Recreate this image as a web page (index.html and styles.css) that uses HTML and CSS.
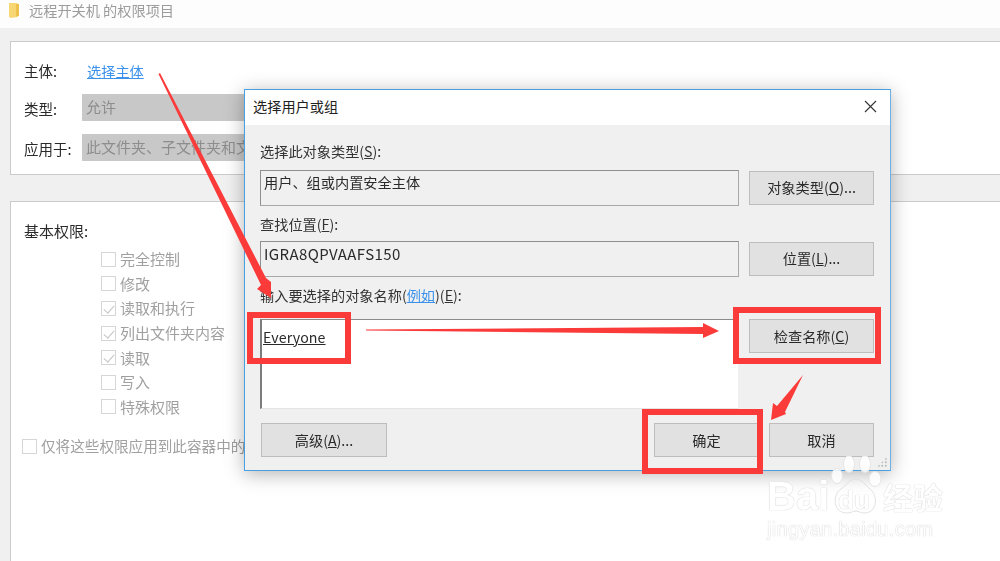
FILE: index.html
```html
<!DOCTYPE html>
<html lang="zh">
<head>
<meta charset="utf-8">
<title>选择用户或组</title>
<link rel="stylesheet" href="styles.css">
</head>
<body>
<div class="page">
  <header class="topbar">
    <svg class="folder" width="13" height="16" viewBox="0 0 13 16"><path d="M1 1h8l1 2v12l-7 1-2-1z" fill="#f7d774"/><path d="M8 2h3v12H8z" fill="#eec04c"/></svg>
    <span>远程开关机 的权限项目</span>
  </header>
  <section class="panel principal">
    <div class="row first"><span class="label">主体:</span><a class="link">选择主体</a></div>
    <div class="row"><span class="label">类型:</span><div class="fake-select">允许</div></div>
    <div class="row"><span class="label">应用于:</span><div class="fake-select">此文件夹、子文件夹和文件</div></div>
  </section>
  <section class="panel perms">
    <div class="perm-title">基本权限:</div>
    <ul class="perm-list">
      <li><i class="box"></i>完全控制</li>
      <li><i class="box"></i>修改</li>
      <li><i class="box on"></i>读取和执行</li>
      <li><i class="box on"></i>列出文件夹内容</li>
      <li><i class="box on"></i>读取</li>
      <li><i class="box"></i>写入</li>
      <li><i class="box"></i>特殊权限</li>
    </ul>
    <div class="only"><i class="box"></i>仅将这些权限应用到此容器中的对象</div>
  </section>
</div>

<div class="dialog">
  <div class="titlebar">
    <span>选择用户或组</span>
    <svg class="close" width="13" height="13" viewBox="0 0 13 13"><path d="M1 1l11 11M12 1L1 12" stroke="#333" stroke-width="1.1" fill="none"/></svg>
  </div>
  <div class="body">
    <div class="cap cap1">选择此对象类型(<u>S</u>):</div>
    <div class="line">
      <div class="field">用户、组或内置安全主体</div>
      <button class="btn raised">对象类型(<u>O</u>)...</button>
    </div>
    <div class="cap cap2">查找位置(<u>F</u>):</div>
    <div class="line">
      <div class="field loc">IGRA8QPVAAFS150</div>
      <button class="btn raised">位置(<u>L</u>)...</button>
    </div>
    <div class="cap cap3">输入要选择的对象名称(<a class="link">例如</a>)(<u>E</u>):</div>
    <div class="line names">
      <div class="field area"><u>Everyone</u></div>
      <button class="btn">检查名称(<u>C</u>)</button>
    </div>
    <div class="actions">
      <button class="btn adv">高级(<u>A</u>)...</button>
      <button class="btn ok">确定</button>
      <button class="btn cancel">取消</button>
    </div>
  </div>
  <div class="grip"></div>
</div>

<svg class="marks" width="1000" height="561" viewBox="0 0 1000 561">
  <g fill="none" stroke="#fb3a3a" stroke-width="6">
    <rect x="250" y="315" width="98" height="46"/>
    <rect x="736" y="310" width="142" height="51"/>
    <rect x="645" y="412" width="115" height="59"/>
  </g>
  <g fill="#fb3a3a">
    <path d="M158.500 74L160 73L266 278L271 282L271 298L257 289L261 285z"/>
    <path d="M366 329.500L703 327L703 323L719 331L703 338L703 334L366 330.500z"/>
    <path d="M803 375L785 412L786 414L771 420L773 403L777 406z"/>
  </g>
</svg>

<div class="watermark">
  <div class="wm-top">
    <span class="wm-bai">Bai</span>
    <span class="wm-du">du</span>
    <span class="wm-cn">经验</span>
  </div>
  <div class="wm-url">jingyan.baidu.com</div>
  <svg class="paw" width="56" height="62" viewBox="0 0 56 62">
    <g fill="#fff" fill-opacity="0.85" stroke="#e4e4e4" stroke-width="1">
      <ellipse cx="7" cy="21" rx="5.500" ry="7.500"/>
      <ellipse cx="19" cy="9" rx="5.500" ry="8.500"/>
      <ellipse cx="35" cy="9" rx="5.500" ry="8.500"/>
      <ellipse cx="45" cy="24" rx="6" ry="7.500"/>
    </g>
    <path d="M26 24c6 0 9 6 14 10 8 6 8 24-6 24-4 0-5-2-8-2s-5 2-9 2C3 58 2 40 11 34c6-4 8-10 15-10z" fill="none" stroke="#e0e0e0" stroke-width="1"/>
  </svg>
</div>
</body>
</html>
```
FILE: styles.css
```css
* { box-sizing: border-box; }
html, body { margin: 0; padding: 0; }
body {
  width: 1000px;
  height: 561px;
  overflow: hidden;
  position: relative;
  background: #fff;
  font-family: "Noto Sans CJK SC", "Liberation Sans", sans-serif;
  font-size: 14.2px;
  line-height: 20px;
  color: #222;
}
.page, .dialog, .marks { filter: blur(0.3px); }
.page {
  height: 561px;
  display: flex;
  flex-direction: column;
  background: #f0f0f0;
  padding-left: 10px;
}
.topbar {
  height: 28px;
  margin-left: -10px;
  padding: 0 0 8px 8px;
  background: #fdfdfd;
  display: flex;
  align-items: center;
  gap: 8px;
  font-size: 14.2px;
  color: #9c9c9c;
}
.panel {
  background: #fff;
  border: 1px solid #cbcbcb;
  border-right: 0;
}
.principal {
  margin-top: 13px;
  height: 134px;
  padding: 17px 0 0 13px;
}
.perms {
  margin-top: 26px;
  flex: 1;
  position: relative;
  padding: 19px 0 0 13px;
  border-bottom: 0;
}
.row {
  display: flex;
  align-items: center;
  height: 27px;
  margin-bottom: 13px;
}
.row.first { margin-bottom: 11px; height: 24px; }
.label { width: 58px; padding-top: 3px; font-size: 14.5px; color: #2a2a2a; }
.row.first .label { width: 63px; padding-top: 0; }
.fake-select {
  width: 260px;
  height: 27px;
  padding: 3px 4px;
  background: #c8c8c8;
  font-size: 15px;
  color: #8d8d8d;
}
.link { color: #3c92ea; text-decoration: underline; }
.perm-title { color: #2a2a2a; height: 20px; font-size: 15px; }
.perm-list {
  list-style: none;
  margin: 6px 0 0 77px;
  padding: 0;
  font-size: 15px;
}
.perm-list li {
  height: 24.6px;
  display: flex;
  align-items: center;
  gap: 4px;
  color: #a0a0a0;
}
.box {
  width: 15px;
  height: 15px;
  flex: none;
  border: 1px solid #d6d6d6;
  background: #fff;
}
.box.on { position: relative; }
.box.on::after {
  content: "";
  position: absolute;
  left: 4px;
  top: 1px;
  width: 5px;
  height: 9px;
  border: solid #c4c4c4;
  border-width: 0 1px 1px 0;
  transform: rotate(42deg);
}
.only {
  margin: 17px 0 0 -2px;
  display: flex;
  align-items: center;
  gap: 4px;
  white-space: nowrap;
  font-size: 14.6px;
  color: #a0a0a0;
}
.dialog {
  position: absolute;
  left: 244px;
  top: 89px;
  width: 647px;
  height: 382px;
  background: #f0f0f0;
  border: 1px solid #4a9fe0;
  border-right-color: #6cb0e8;
  box-shadow: 0 3px 18px rgba(0, 0, 0, 0.3);
}
.titlebar {
  height: 35px;
  background: #fff;
  display: flex;
  align-items: center;
  justify-content: space-between;
  padding: 0 13px 3px 8px;
  color: #222;
}
.body { padding: 0 16px 0 15px; }
.cap { height: 20px; color: #333; }
.cap1 { margin-top: 16px; margin-bottom: 9px; }
.cap2 { margin-top: 8px; margin-bottom: 7px; }
.cap3 { margin-top: 8px; margin-bottom: 14px; }
.line {
  display: flex;
  align-items: center;
  justify-content: space-between;
  height: 36px;
}
.field {
  width: 479px;
  height: 36px;
  padding: 1px 3px;
  background: #f0f0f0;
  border: 1px solid #8f8f8f;
  border-right-color: #a8a8a8;
  border-bottom-color: #a8a8a8;
  color: #2a2a2a;
}
.field.loc {
  padding-top: 2px;
  font-size: 15px;
  letter-spacing: 0.4px;
}
.names { height: 90px; align-items: flex-start; }
.field.area {
  height: 90px;
  padding: 7px 1px;
  background: #fff;
  border-color: #8a8a8a #f0f0f0 #e4e4e4 #7c7c7c;
  border-width: 1px 1px 1px 2px;
  letter-spacing: 0.1px;
}
.btn {
  width: 125px;
  height: 34px;
  padding: 0;
  border: 1px solid #bdbdbd;
  background: #e1e1e1;
  font: inherit;
  color: #2a2a2a;
}
.btn.raised { padding-bottom: 2px; }
.actions {
  margin-top: 14px;
  display: flex;
  padding-left: 1px;
}
.adv { width: 126px; }
.ok { width: 105px; margin-left: auto; }
.cancel { width: 105px; margin-left: 10px; }
.grip {
  position: absolute;
  right: 3px;
  bottom: 3px;
  width: 10px;
  height: 10px;
  background: radial-gradient(circle, #b8b8b8 1px, transparent 1.2px) 0 0 / 3.500px 3.500px;
  clip-path: polygon(100% 0, 100% 100%, 0 100%);
}
.marks {
  position: absolute;
  left: 0;
  top: 0;
}
.watermark {
  position: absolute;
  left: 767px;
  top: 474px;
  width: 190px;
  color: #fff;
  text-shadow: 0 0 1px #c8c8c8, 0 0 1px #d8d8d8;
  font-family: "Liberation Sans", sans-serif;
}
.wm-top {
  display: flex;
  align-items: center;
  height: 44px;
}
.wm-bai { width: 71px; font-size: 40px; font-weight: 700; }
.wm-du { width: 45px; font-size: 26px; font-weight: 700; padding-top: 7px; }
.wm-cn { font-size: 30px; font-family: "Noto Sans CJK SC", sans-serif; font-weight: 700; }
.wm-url { font-size: 20px; line-height: 22px; letter-spacing: 0.3px; }
.paw { position: absolute; left: 63px; top: -19px; }
```
